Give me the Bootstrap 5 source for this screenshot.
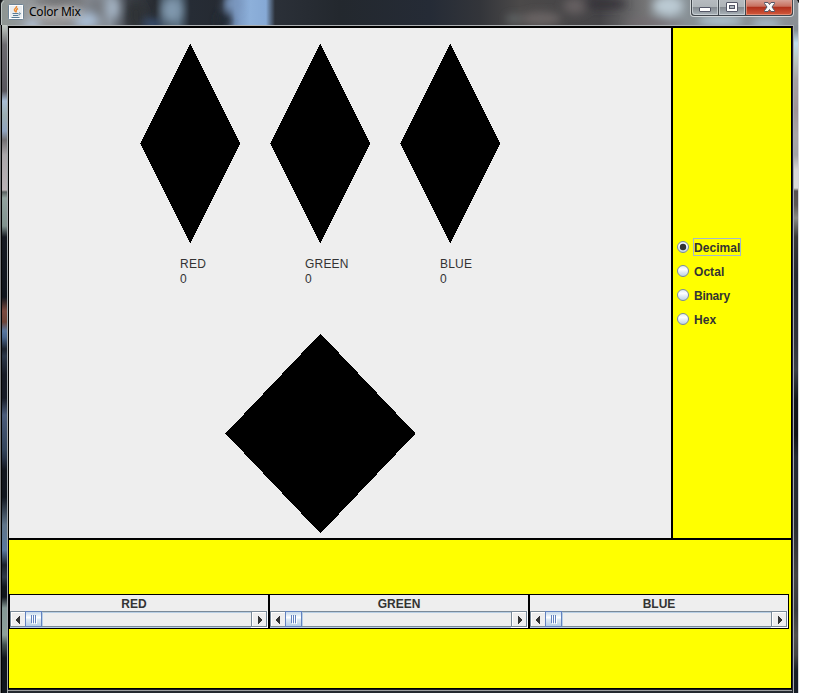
<!DOCTYPE html>
<html lang="en">
<head>
<meta charset="utf-8">
<title>Color Mix</title>
<link href="https://cdn.jsdelivr.net/npm/bootstrap@5.3.0/dist/css/bootstrap.min.css" rel="stylesheet">
<style>
html,body{height:100%;overflow:hidden}
body{background:#fff;font:12px/15px "Liberation Sans",Arial,sans-serif;color:#333}
svg{display:block}
.win{width:799px;height:693px;overflow:hidden;background:#1b2129}
.titlebar{height:25px;overflow:hidden;background:linear-gradient(90deg,#8d9591 0,#93989b 20px,#8e8e90 60px,#85888d 80px,#87909b 110px,#3d4148 128px,#272b31 155px,#4a5a69 164px,#596e80 178px,#262c35 190px,#252a32 222px,#7794bd 235px,#8db0da 250px,#86a9d5 266px,#2b3038 275px,#23282e 340px,#252b36 430px,#33353a 480px,#4b4949 520px,#454447 600px,#747475 645px,#96a1a8 670px,#7e8589 700px,#8b9095 799px)}
.scene{left:0;top:0}
.caption-text{font-family:"Noto Sans","Open Sans",sans-serif;font-size:12px;line-height:23px;color:#000;letter-spacing:-.22px;margin-left:5px;text-shadow:0 0 6px #ccc,0 0 8px #bbb}
.app-icon{margin:4px 0 0 8px}
.caption-buttons{margin-right:5px}
.edge-l{width:8px;border-left:1px solid #77797b;border-right:1px solid #a5aaac;box-shadow:inset 1px 0 #000;background:linear-gradient(#c3cbc5 0,#6c6b70 20px,#58565d 66px,#a8bdd5 76px,#9caeb1 90px,#8fa3bf 106px,#737174 115px,#aaa7aa 130px,#b9b2b5 165px,#5a6261 167px,#92a39f 173px,#81938f 201px,#161a22 212px,#10151d 272px,#7c4b40 286px,#6d4438 297px,#58779f 306px,#4a678f 312px,#1c232e 324px,#2b3749 331px,#171b25 350px,#171b26 373px,#4b5c7b 390px,#33445b 425px,#283448 433px,#12161e 445px,#11161f 472px,#60758a 500px,#5a789e 525px,#1b212c 540px,#303a49 552px,#11161e 562px,#11151b 572px,#849894 583px,#8da09b 610px,#42504f 620px,#11151c 633px,#11161e 665px)}
.edge-r{width:6px;border-left:1px solid #a7aaac;border-right:1px solid #d2d5da;background:linear-gradient(#858d95 0,#858d95 5px,#c0dced 18px,#bac5c1 35px,#a5a1a3 55px,#9f9397 85px,#a8a5a7 110px,#a3a3a6 130px,#d7d5d7 145px,#d8d8d9 163px,#565051 166px,#5d5856 180px,#898985 193px,#383838 212px,#262a31 250px,#30343a 315px,#3b4047 345px,#11161b 375px,#111316 410px,#242b34 432px,#2a2d31 500px,#444443 550px,#393b3e 585px,#51514f 610px,#444 630px,#171d25 646px,#171d25 665px)}
.client{width:785px;height:662px;border-left:1px solid #000;border-right:1px solid #202125;border-top:2px solid #000}
.client-wrap{border-top:1px solid #adb0b2;width:785px}
.drawing{width:664px;height:512px;background:#eee;border-right:2px solid #000;border-bottom:2px solid #000}
.radix{width:119px;height:512px;background:#ff0;border-right:1px solid #000;border-bottom:2px solid #000;font-weight:700;padding-top:207px}
.opt{height:24px;padding-left:4px}
.opt span{margin-left:4px;height:18px;padding-top:1px;border:1px solid transparent;line-height:16px;letter-spacing:.05px}
.opt .focused{border-color:#a3b8cc}
.opt .tight{letter-spacing:-.25px}
.controls{height:148px;background:#ff0;padding-top:54px;border-right:1px solid #000}
.chan{width:260px;height:35px;border:1px solid #000;background:#eee;font-weight:700}
.chan-name{height:16px;line-height:19px}
.chan-name.first{padding-right:10px}
.bottom-edge{height:5px;border-top:1px solid #000;border-bottom:2px solid #252a30;background:linear-gradient(#181b20 50%,#9b9d9e 50%);margin-right:1px}
</style>
</head>
<body>
<div class="win d-flex flex-column position-relative">
  <div class="titlebar d-flex position-relative flex-shrink-0">
    <svg class="scene position-absolute" width="799" height="25">
      <defs><filter id="soft" x="-50%" y="-50%" width="200%" height="200%"><feGaussianBlur stdDeviation="4"/></filter></defs>
      <g filter="url(#soft)">
        <ellipse cx="96" cy="8" rx="8" ry="12" fill="#777b82"/><ellipse cx="86" cy="21" rx="12" ry="8" fill="#a9bdd4"/><ellipse cx="113" cy="8" rx="6" ry="11" fill="#a4b4c4"/>
        <ellipse cx="32" cy="25" rx="8" ry="5" fill="#b5c6db"/><ellipse cx="60" cy="1" rx="25" ry="4" fill="#696a6d"/><ellipse cx="58" cy="15" rx="24" ry="6" fill="#a09fa0"/>
        <ellipse cx="136" cy="15" rx="9" ry="14" fill="#2d3036"/><ellipse cx="172" cy="10" rx="10" ry="12" fill="#8098ad"/>
        <ellipse cx="153" cy="24" rx="9" ry="4" fill="#3e5c87"/><ellipse cx="232" cy="4" rx="8" ry="7" fill="#7a97be"/><ellipse cx="224" cy="20" rx="7" ry="9" fill="#222a35"/>
        <ellipse cx="514" cy="19" rx="8" ry="4" fill="#63696a"/><ellipse cx="541" cy="19" rx="20" ry="7" fill="#696364"/><ellipse cx="575" cy="6" rx="12" ry="8" fill="#655f61"/><ellipse cx="605" cy="4" rx="22" ry="5" fill="#343239"/>
        <ellipse cx="668" cy="6" rx="15" ry="9" fill="#bccbd4"/><ellipse cx="655" cy="23" rx="30" ry="4" fill="#726b70"/><ellipse cx="720" cy="21" rx="24" ry="5" fill="#b4c9d4"/><ellipse cx="766" cy="24" rx="15" ry="5" fill="#a9bdc9"/>
      </g>
      <path d="M0 0h3L1 3v22H0z" fill="#15181b"/><path d="M1.5 25V4L4 1" fill="none" stroke="#bbc3c1"/>
      <path d="M797 0h2v3z" fill="#111"/><path d="M798.5 3v22" stroke="#d5d9dc"/>
    </svg>
    <svg class="app-icon position-relative" width="16" height="16">
      <rect x=".5" y=".5" width="15" height="15" rx="1" fill="#e9edf0" stroke="#6e8496"/><rect x="1.5" y="1.5" width="13" height="13" fill="none" stroke="#fff"/>
      <path d="M8.5 2c1 2-3 2.500-2 4.500L8 8M10 4.500c-3 1.500-1 2-2 3.500" fill="none" stroke="#eb8931" stroke-width="1.400"/>
      <path d="M4.500 9.500h6M5 11.500h5M3.500 13.500h8M11 9c2-.5 2 1.500-.5 2" fill="none" stroke="#567b96" stroke-width="1"/>
    </svg>
    <span class="caption-text position-relative">Color Mix</span>
    <svg class="caption-buttons ms-auto position-relative" width="104" height="18">
      <defs>
        <linearGradient id="glass" x2="0" y2="1"><stop stop-color="#b6bbc0"/><stop offset=".45" stop-color="#aeb4b8"/><stop offset=".5" stop-color="#858b91"/><stop offset="1" stop-color="#a9b3b9"/></linearGradient>
        <linearGradient id="red" x2="0" y2="1"><stop stop-color="#d7a197"/><stop offset=".42" stop-color="#c8705f"/><stop offset=".48" stop-color="#b02f1c"/><stop offset="1" stop-color="#d35a3c"/></linearGradient>
      </defs>
      <path d="M0 0v13q0 4 4 4h96q4 0 4-4V0z" fill="#d2d6d8"/>
      <path d="M1 0v13q0 3 3 3h96q3 0 3-3V0z" fill="#40464c"/>
      <path d="M2 0v12q0 3 3 3h23V0z" fill="url(#glass)"/><path d="M29 0h26v15H29z" fill="url(#glass)"/><path d="M56 0h46v12q0 3-3 3H56z" fill="url(#red)"/>
      <path d="M2.500 0v12q0 2.500 2.500 2.500h22.500V0M29.500 0v14.500h25V0" fill="none" stroke="#d6dbde" stroke-opacity=".7"/><path d="M56.500 0v14.500H99q2.500 0 2.500-2.500V0" fill="none" stroke="#e59b86" stroke-opacity=".75"/>
      <rect x="9.500" y="7.500" width="11" height="4" rx=".5" fill="#fff" stroke="#535666"/>
      <rect x="36.500" y="2.500" width="11" height="9" rx=".5" fill="#fff" stroke="#535666"/><rect x="39.500" y="5.500" width="5" height="3" fill="#b1b9bf" stroke="#535666"/>
      <path d="M74.500 2.500h3.500l1.500 2 1.500-2h3.500v1l-2.500 3.500 2.500 3.500v1H81l-1.500-2-1.500 2h-3.500v-1L77 7l-2.500-3.500z" fill="#f9f9f9" stroke="#535666"/>
    </svg>
  </div>

  <div class="d-flex flex-shrink-0">
    <div class="edge-l"></div>
    <div class="client-wrap">
      <div class="client">
        <div class="d-flex">
          <div class="drawing">
            <svg width="662" height="510" viewBox="9 28 662 510">
              <g fill="#000" shape-rendering="crispEdges">
                <path d="M190.100 43.500l50 100-50 100-50-100z"/><path d="M320.100 43.500l50 100-50 100-50-100z"/><path d="M450.100 43.500l50 100-50 100-50-100z"/>
                <path d="M320.500 333.500l95 100-95 100-95-100z"/>
              </g>
              <g fill="#333" font-size="12">
                <text x="180" y="268" textLength="26">RED</text><text x="180" y="283">0</text>
                <text x="305" y="268" textLength="43.500">GREEN</text><text x="305" y="283">0</text>
                <text x="440" y="268" textLength="32">BLUE</text><text x="440" y="283">0</text>
              </g>
            </svg>
          </div>
          <div class="radix">
            <div class="opt d-flex align-items-center">
              <svg width="12" height="12"><defs><linearGradient id="rb" x2="0" y2="1"><stop stop-color="#dce8f3"/><stop offset=".35" stop-color="#fff"/><stop offset="1" stop-color="#b8cfe5"/></linearGradient></defs><circle cx="6" cy="6" r="5.500" fill="url(#rb)" stroke="#7a8a99"/><circle cx="6" cy="6" r="3.200" fill="#333"/></svg><span class="focused">Decimal</span>
            </div>
            <div class="opt d-flex align-items-center"><svg width="12" height="12"><circle cx="6" cy="6" r="5.500" fill="url(#rb)" stroke="#7a8a99"/></svg><span>Octal</span></div>
            <div class="opt d-flex align-items-center"><svg width="12" height="12"><circle cx="6" cy="6" r="5.500" fill="url(#rb)" stroke="#7a8a99"/></svg><span class="tight">Binary</span></div>
            <div class="opt d-flex align-items-center"><svg width="12" height="12"><circle cx="6" cy="6" r="5.500" fill="url(#rb)" stroke="#7a8a99"/></svg><span>Hex</span></div>
          </div>
        </div>
        <div class="controls">
          <div class="d-flex">
            <div class="chan"><div class="chan-name first text-center">RED</div>
              <svg width="258" height="17" shape-rendering="crispEdges">
                <defs>
                  <linearGradient id="thumb" x2="0" y2="1"><stop stop-color="#c4d8ec"/><stop offset=".4" stop-color="#fff"/><stop offset=".55" stop-color="#dce8f3"/><stop offset="1" stop-color="#b8cfe5"/></linearGradient>
                  <g id="bar">
                    <path d="M0 0h257v16H0z" fill="#eee"/><path d="M0 16h258v1H0zM257 0h1v17h-1z" fill="#fff"/>
                    <path d="M0 0h257v1H0zM0 15h257v1H0zM0 0h1v16H0zM15 0h1v16h-1zM241 0h1v16h-1zM256 0h1v16h-1z" fill="#7a8a99"/>
                    <path d="M32 1h209v1H32zM0 16h241v1H0z" fill="#b8cfe5"/><path d="M1 1h14v1H2v13H1zM242 1h14v1h-13v13h-1z" fill="#fff"/>
                    <path d="M9 5h1v8H9v-1H8v-1H7v-1H6V8h1V7h1V6h1zM248 5h1v1h1v1h1v1h1v2h-1v1h-1v1h-1v1h-1z" fill="#333"/>
                    <path d="M15 0h17v16H15z" fill="#6382bf"/><path d="M16 1h15v14H16z" fill="url(#thumb)"/><path d="M32 2h1v13h-1z" fill="#b8cfe5"/>
                    <path d="M21 4h1v8h-1zM23 4h1v8h-1zM25 4h1v8h-1z" fill="#6382bf"/><path d="M22 5h1v8h-1zM24 5h1v8h-1zM26 5h1v8h-1z" fill="#fff"/>
                  </g>
                </defs>
                <use href="#bar"/>
              </svg>
            </div>
            <div class="chan"><div class="chan-name text-center">GREEN</div><svg width="258" height="17" shape-rendering="crispEdges"><use href="#bar"/></svg></div>
            <div class="chan"><div class="chan-name text-center">BLUE</div><svg width="258" height="17" shape-rendering="crispEdges"><use href="#bar"/></svg></div>
          </div>
        </div>
      </div>
      <div class="bottom-edge"></div>
    </div>
    <div class="edge-r"></div>
  </div>
</div>
<script src="https://cdn.jsdelivr.net/npm/bootstrap@5.3.0/dist/js/bootstrap.bundle.min.js"></script>
</body>
</html>
